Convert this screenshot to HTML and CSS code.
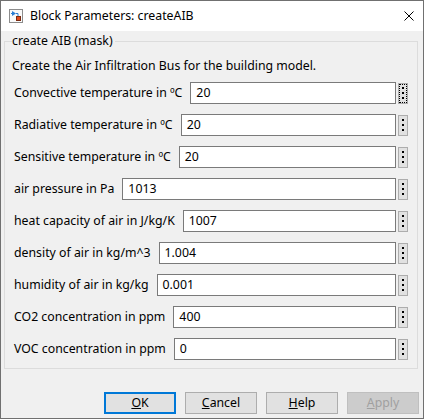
FILE: index.html
```html
<!DOCTYPE html>
<html>
<head>
<meta charset="utf-8">
<link rel="stylesheet" href="styles.css">
</head>
<body>
<div class="window">
  <div class="titlebar">
    <svg class="app-icon" width="14" height="14" viewBox="0 0 14 14">
      <rect x="0.5" y="0.5" width="13" height="13" fill="#fafafa" stroke="#8c8c8c"/>
      <path d="M3 2 L3 7 L7 4.5 Z" fill="#2a7fd4"/>
      <path d="M2 4.5 H3 M7 4.5 H9 V7" stroke="#2a7fd4" fill="none"/>
      <rect x="7.5" y="7.5" width="4" height="4" fill="#e04a1c" stroke="#7a2a10"/>
    </svg>
    <span class="title">Block Parameters: createAIB</span>
    <svg class="close" width="10" height="10" viewBox="0 0 10 10">
      <path d="M0.5 0.5 L9.5 9.5 M9.5 0.5 L0.5 9.5" stroke="#000" stroke-width="1"/>
    </svg>
  </div>
  <div class="content">
    <fieldset class="group">
      <legend class="group-title">create AIB (mask)</legend>
      <p class="desc">Create the Air Infiltration Bus for the building model.</p>
      <div class="rows">
        <div class="row"><span class="label">Convective temperature in ºC</span><span class="edit">20</span><span class="more focused"><i></i><i></i><i></i></span></div>
        <div class="row"><span class="label">Radiative temperature in ºC</span><span class="edit">20</span><span class="more"><i></i><i></i><i></i></span></div>
        <div class="row"><span class="label">Sensitive temperature in ºC</span><span class="edit">20</span><span class="more"><i></i><i></i><i></i></span></div>
        <div class="row"><span class="label">air pressure in Pa</span><span class="edit">1013</span><span class="more"><i></i><i></i><i></i></span></div>
        <div class="row"><span class="label">heat capacity of air in J/kg/K</span><span class="edit">1007</span><span class="more"><i></i><i></i><i></i></span></div>
        <div class="row"><span class="label">density of air in kg/m^3</span><span class="edit">1.004</span><span class="more"><i></i><i></i><i></i></span></div>
        <div class="row"><span class="label">humidity of air in kg/kg</span><span class="edit">0.001</span><span class="more"><i></i><i></i><i></i></span></div>
        <div class="row"><span class="label">CO2 concentration in ppm</span><span class="edit">400</span><span class="more"><i></i><i></i><i></i></span></div>
        <div class="row"><span class="label">VOC concentration in ppm</span><span class="edit">0</span><span class="more"><i></i><i></i><i></i></span></div>
      </div>
    </fieldset>
    <div class="buttons">
      <button class="btn default"><u>O</u>K</button>
      <button class="btn"><u>C</u>ancel</button>
      <button class="btn"><u>H</u>elp</button>
      <button class="btn disabled"><u>A</u>pply</button>
    </div>
  </div>
</div>
</body>
</html>
```

FILE: styles.css
```css
* { box-sizing: border-box; }
html, body { margin: 0; padding: 0; }
body {
  width: 424px;
  height: 419px;
  font-family: "Noto Sans", "Open Sans", sans-serif;
  font-size: 12.3px;
  color: #000;
  background: #f0f0f0;
}
.window {
  width: 424px;
  height: 419px;
  border: 1px solid #707070;
  background: #f0f0f0;
  display: flex;
  flex-direction: column;
}
.titlebar {
  height: 30px;
  flex: none;
  background: #fff;
  display: flex;
  align-items: center;
  padding-left: 8px;
}
.app-icon { flex: none; margin-right: 7px; }
.title { font-size: 12.3px; line-height: 16px; }
.close { flex: none; margin-left: auto; margin-right: 9px; }
.content {
  flex: 1;
  display: flex;
  flex-direction: column;
  padding: 1px 0 0 0;
}
.group {
  margin: 0 5px 0 3px;
  border: 1px solid #dcdcdc;
  padding: 7px 9px 8px 7px;
  min-width: 0;
}
.group-title {
  padding: 0 2px 0 0;
  line-height: 18px;
  height: 18px;
}
.desc {
  margin: 0 0 7px 0;
  line-height: 18px;
  white-space: nowrap;
}
.rows {
  display: flex;
  flex-direction: column;
  gap: 10px;
  padding-left: 2px;
}
.row {
  display: flex;
  align-items: center;
  height: 22px;
}
.label {
  flex: none;
  white-space: nowrap;
  margin-right: 8px;
  line-height: 18px;
}
.edit {
  flex: 1;
  height: 22px;
  background: #fff;
  border: 1px solid #7a7a7a;
  padding: 0 5px;
  line-height: 20px;
}
.more {
  flex: none;
  width: 10px;
  height: 21px;
  margin-left: 2px;
  background: #e1e1e1;
  border: 1px solid #adadad;
  display: flex;
  flex-direction: column;
  align-items: center;
  justify-content: center;
  gap: 3px;
}
.more i {
  display: block;
  width: 2px;
  height: 2px;
  background: #000;
}
.more.focused {
  outline: 1px dotted #000;
  outline-offset: -2px;
}
.buttons {
  display: flex;
  justify-content: flex-end;
  gap: 9px;
  margin-top: 23px;
  padding-right: 4px;
}
.btn {
  width: 72px;
  height: 22px;
  margin: 0;
  padding: 0;
  font-family: inherit;
  font-size: 12.3px;
  color: #000;
  background: #e1e1e1;
  border: 1px solid #adadad;
  border-radius: 0;
  line-height: 18px;
}
.btn.default { border: 2px solid #0078d7; }
.btn.disabled {
  background: #cccccc;
  border-color: #bfbfbf;
  color: #a0a0a0;
}
```
